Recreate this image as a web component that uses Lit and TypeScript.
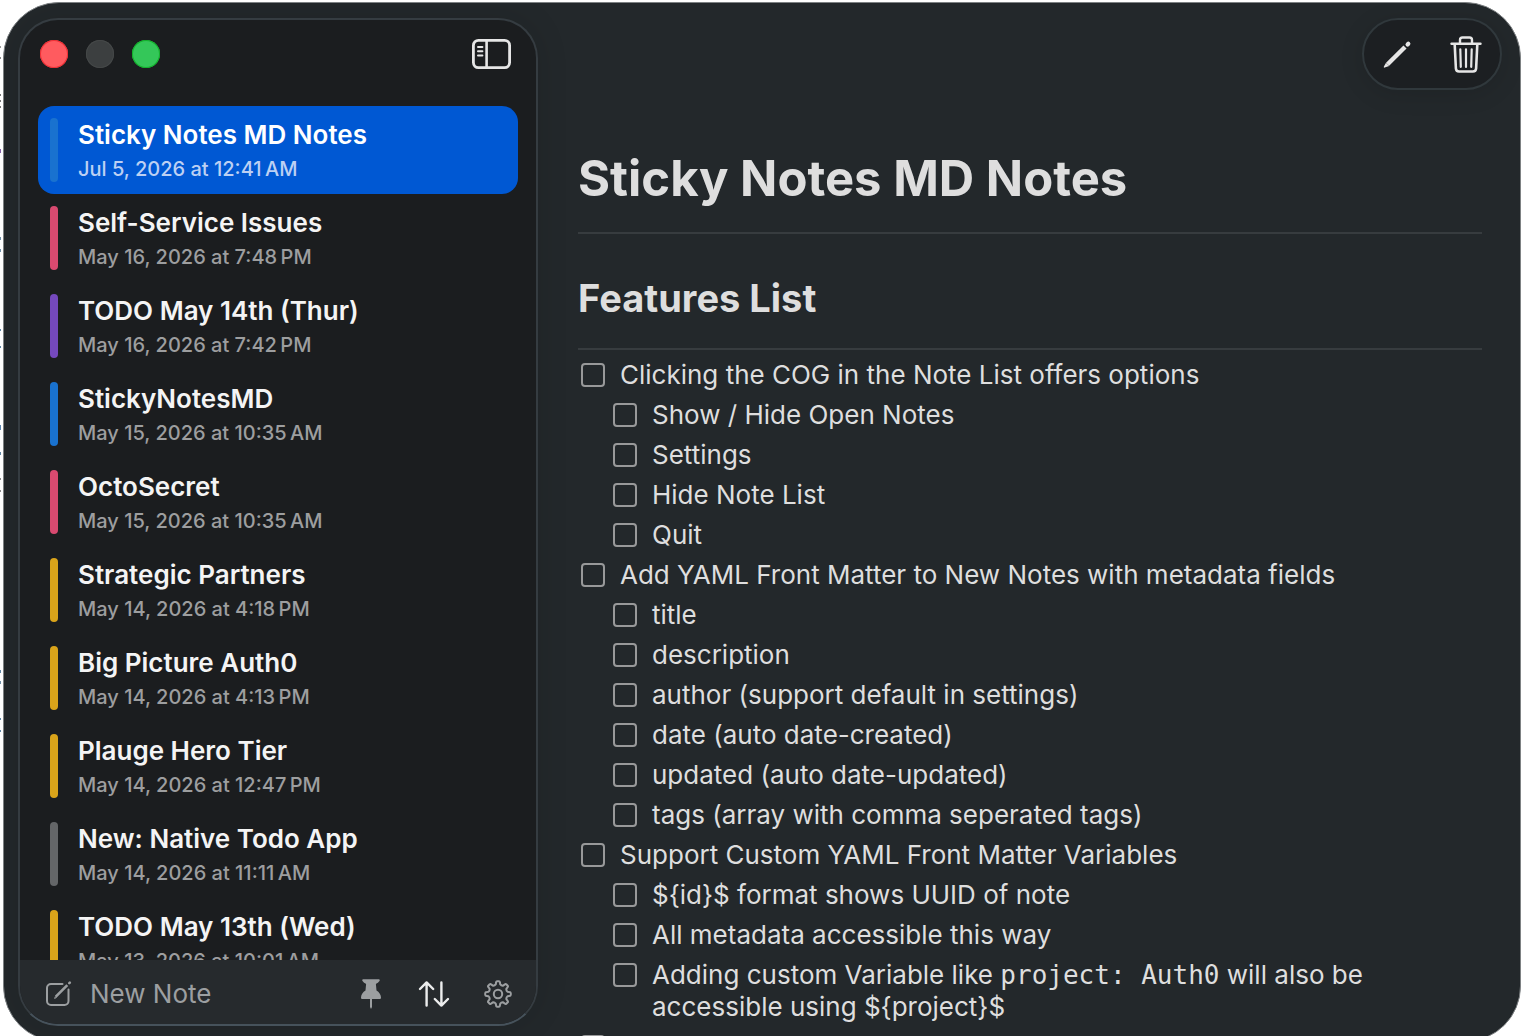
import { LitElement, html, svg, css } from "lit";
import { customElement, state } from "lit/decorators.js";
import { classMap } from "lit/directives/class-map.js";

interface Note {
  title: string;
  date: string;
  color: string;
}

interface Task {
  text: unknown;
  nested?: boolean;
}

const NOTES: Note[] = [
  { title: "Sticky Notes MD Notes", date: "Jul 5, 2026 at 12:41\u202fAM", color: "blue" },
  { title: "Self-Service Issues", date: "May 16, 2026 at 7:48\u202fPM", color: "pink" },
  { title: "TODO May 14th (Thur)", date: "May 16, 2026 at 7:42\u202fPM", color: "purple" },
  { title: "StickyNotesMD", date: "May 15, 2026 at 10:35\u202fAM", color: "blue" },
  { title: "OctoSecret", date: "May 15, 2026 at 10:35\u202fAM", color: "pink" },
  { title: "Strategic Partners", date: "May 14, 2026 at 4:18\u202fPM", color: "yellow" },
  { title: "Big Picture Auth0", date: "May 14, 2026 at 4:13\u202fPM", color: "yellow" },
  { title: "Plauge Hero Tier", date: "May 14, 2026 at 12:47\u202fPM", color: "yellow" },
  { title: "New: Native Todo App", date: "May 14, 2026 at 11:11\u202fAM", color: "gray" },
  { title: "TODO May 13th (Wed)", date: "May 13, 2026 at 10:01\u202fAM", color: "yellow" },
];

const TASKS: Task[] = [
  { text: "Clicking the COG in the Note List offers options" },
  { text: "Show / Hide Open Notes", nested: true },
  { text: "Settings", nested: true },
  { text: "Hide Note List", nested: true },
  { text: "Quit", nested: true },
  { text: "Add YAML Front Matter to New Notes with metadata fields" },
  { text: "title", nested: true },
  { text: "description", nested: true },
  { text: "author (support default in settings)", nested: true },
  { text: "date (auto date-created)", nested: true },
  { text: "updated (auto date-updated)", nested: true },
  { text: "tags (array with comma seperated tags)", nested: true },
  { text: "Support Custom YAML Front Matter Variables" },
  { text: "${id}$ format shows UUID of note", nested: true },
  { text: "All metadata accessible this way", nested: true },
  {
    text: html`Adding custom Variable like <code>project: Auth0</code> will also be accessible using \${project}$`,
    nested: true,
  },
  { text: "" },
];

// Slivers of the page behind the window: [y, height, colour].
const BEHIND: [number, number, string][] = [
  [46, 2, "#9a9a9a"],
  [57, 2, "#8a8a8a"],
  [94, 2, "#777"],
  [100, 2, "#777"],
  [106, 2, "#777"],
  [149, 4, "#8561a8"],
  [237, 3, "#6f8fa6"],
  [249, 3, "#6f8fa6"],
  [329, 2, "#5f86a4"],
  [346, 2, "#5f86a4"],
  [425, 5, "#5c84ad"],
  [452, 3, "#5f86a4"],
  [478, 2, "#8a8a8a"],
  [490, 2, "#8a8a8a"],
  [670, 3, "#5f86a4"],
  [681, 3, "#6f8fa6"],
  [718, 2, "#5f86a4"],
  [730, 2, "#5f86a4"],
];

// Outline of the settings cog: rounded teeth around a ring.
function cogPath(teeth: number, outer: number, inner: number, c: number): string {
  const step = (Math.PI * 2) / teeth;
  const at = (r: number, a: number) =>
    `${(c + r * Math.sin(a)).toFixed(2)} ${(c - r * Math.cos(a)).toFixed(2)}`;
  let d = "";
  for (let i = 0; i < teeth; i++) {
    const a = i * step;
    d += i ? `Q${at(inner - 1, a - step * 0.5)} ${at(inner, a - step * 0.3)}` : `M${at(inner, a - step * 0.3)}`;
    d += `L${at(outer - 1.4, a - step * 0.22)}`;
    d += `Q${at(outer, a - step * 0.2)} ${at(outer, a - step * 0.1)}`;
    d += `L${at(outer, a + step * 0.1)}`;
    d += `Q${at(outer, a + step * 0.2)} ${at(outer - 1.4, a + step * 0.22)}`;
    d += `L${at(inner, a + step * 0.3)}`;
  }
  return `${d}Q${at(inner - 1, -step * 0.5)} ${at(inner, -step * 0.3)}Z`;
}

@customElement("notes-sidebar")
export class NotesSidebar extends LitElement {
  @state() private selected = 0;

  static styles = css`
    :host {
      display: flex;
      flex-direction: column;
      box-sizing: border-box;
      overflow: hidden;
      border: 2px solid #353c41;
      border-bottom-color: #46525b;
      border-radius: 40px;
      background: #1b1d1f;
      box-shadow: 0 0 32px rgba(0, 0, 0, 0.12);
    }
    button {
      margin: 0;
      padding: 0;
      border: 0;
      background: none;
      color: inherit;
      font: inherit;
      text-align: left;
    }
    svg {
      display: block;
    }
    .titlebar {
      display: flex;
      align-items: center;
      gap: 18px;
      flex: none;
      height: 68px;
      padding: 0 24px 0 20px;
    }
    .light {
      width: 28px;
      height: 28px;
      border-radius: 50%;
    }
    .close {
      background: #ff5b5f;
      box-shadow: inset 0 0 0 1px #ee2f35;
    }
    .minimize {
      background: #3c3f40;
      box-shadow: inset 0 0 0 1px #454848;
    }
    .zoom {
      background: #34c759;
      box-shadow: inset 0 0 0 1px #12b02a;
    }
    .toggle {
      margin-left: auto;
      color: #e6e6e6;
    }
    .notes {
      flex: 1;
      min-height: 0;
      overflow: hidden;
      margin: 0;
      padding: 18px 18px 0;
      list-style: none;
    }
    .note {
      display: flex;
      gap: 20px;
      box-sizing: border-box;
      width: 100%;
      height: 88px;
      padding: 12px;
      border-radius: 16px;
    }
    .note.selected {
      background: #0058d3;
    }
    .bar {
      width: 8px;
      border-radius: 4px;
    }
    .blue { background: #1972cf; }
    .pink { background: #d94a70; }
    .purple { background: #7549bd; }
    .yellow { background: #daa41a; }
    .gray { background: #646668; }
    .text {
      display: flex;
      flex-direction: column;
      white-space: nowrap;
    }
    .title {
      color: #f4f4f4;
      font-size: 26px;
      font-weight: 600;
      line-height: 34px;
    }
    .date {
      color: #9d9e9f;
      font-size: 20px;
      font-weight: 500;
      line-height: 34px;
    }
    .selected .title { color: #fff; }
    .selected .date { color: #bcd0f3; }
    .footer {
      display: flex;
      align-items: center;
      flex: none;
      box-sizing: border-box;
      height: 64px;
      padding: 4px 24px 0;
      background: #262a2d;
      color: #9c9fa1;
    }
    .new {
      display: flex;
      align-items: center;
      gap: 18px;
      margin-right: auto;
      font-size: 26px;
      line-height: 32px;
    }
    .tools {
      display: flex;
      align-items: center;
      gap: 34px;
    }
    .sort { color: #eceded; }
  `;

  render() {
    return html`
      <div class="titlebar">
        <button class="light close" aria-label="Close"></button>
        <button class="light minimize" aria-label="Minimize"></button>
        <button class="light zoom" aria-label="Zoom"></button>
        <button class="toggle" aria-label="Toggle sidebar">
          <svg width="40" height="32" viewBox="0 0 40 32" fill="none" stroke="currentColor">
            <rect x="1.4" y="2.4" width="36.2" height="27.2" rx="5" stroke-width="2.8" />
            <path d="M14.6 2.4v27.2" stroke-width="2.6" />
            <path d="M6 9h4.4M6 13.3h4.4M6 17.600h4.400" stroke-width="2" stroke-linecap="round" />
          </svg>
        </button>
      </div>
      <ul class="notes">
        ${NOTES.map(
          (n, i) => html`<li>
            <button
              class=${classMap({ note: true, selected: i === this.selected })}
              @click=${() => (this.selected = i)}
            >
              <span class="bar ${n.color}"></span>
              <span class="text">
                <span class="title">${n.title}</span>
                <span class="date">${n.date}</span>
              </span>
            </button>
          </li>`,
        )}
      </ul>
      <div class="footer">
        <button class="new">
          <svg width="28" height="28" viewBox="-1 0 28 28" fill="none" stroke="currentColor" stroke-width="2">
            <path d="M17.500 4H6a4 4 0 0 0-4 4v13a4 4 0 0 0 4 4h13.500a4 4 0 0 0 4-4V9.500" stroke-linecap="round" />
            <path d="M10.800 16.700 22.300 5.100" stroke-width="2.600" />
            <path d="M9.600 18.400l1.800-.8-1-1z" stroke-width="1" />
            <path d="M24.300 3.100l.5-.5" stroke-width="2.600" stroke-linecap="round" />
          </svg>
          New Note
        </button>
        <div class="tools">
          <button aria-label="Pin">
            <svg width="24" height="32" viewBox="1 0 24 32" fill="currentColor">
              <path d="M4.200 1.200h15.600c1 0 1.200 1 .7 1.700-.8 1.200-2.200 2.200-3.600 3l.6 6.600c2.600 1.500 4.300 3.900 4.500 7 0 1-.6 1.500-1.500 1.500H3.500c-.9 0-1.500-.5-1.500-1.500.2-3.100 1.900-5.500 4.500-7l.6-6.600c-1.400-.8-2.800-1.800-3.600-3-.5-.7-.3-1.700.7-1.700z" />
              <path d="M11 20h2v9l-1 2-1-2z" />
            </svg>
          </button>
          <button class="sort" aria-label="Sort">
            <svg width="32" height="28" viewBox="0 0 32 28" fill="none" stroke="currentColor" stroke-width="2.4" stroke-linecap="round" stroke-linejoin="round">
              <path d="M8.600 25.500V2.500M2 9l6.600-6.600L15.200 9" />
              <path d="M23.400 2.500v23M16.800 19l6.600 6.600L30 19" />
            </svg>
          </button>
          <button aria-label="Settings">
            <svg width="28" height="28" viewBox="0 0 28 28" fill="none" stroke="currentColor" stroke-width="2" stroke-linejoin="round">
              <path d=${cogPath(8, 12.8, 9.800, 14)} />
              <circle cx="14" cy="14" r="4.200" />
            </svg>
          </button>
        </div>
      </div>
    `;
  }
}

@customElement("note-view")
export class NoteView extends LitElement {
  static styles = css`
    :host {
      display: flex;
      flex-direction: column;
      min-width: 0;
      color: #dedede;
    }
    .toolbar {
      display: flex;
      align-self: flex-end;
      align-items: center;
      justify-content: space-between;
      flex: none;
      box-sizing: border-box;
      width: 140px;
      height: 72px;
      padding: 0 16px;
      border: 2px solid #30383c;
      border-radius: 36px;
      background: #1c1f22;
      color: #e6e6e6;
      box-shadow: 0 4px 24px rgba(0, 0, 0, 0.12);
    }
    button {
      margin: 0;
      padding: 0;
      border: 0;
      background: none;
      color: inherit;
      font: inherit;
    }
    svg {
      display: block;
    }
    .document {
      padding: 56px 20px 0 40px;
    }
    h1,
    h2 {
      margin: 0;
      border-bottom: 2px solid #373c3f;
      font-weight: 700;
    }
    h1 {
      padding-bottom: 20px;
      font-size: 49px;
      line-height: 66px;
    }
    h2 {
      padding: 40px 0 26px;
      font-size: 38px;
      line-height: 48px;
    }
    .tasks {
      margin: 0;
      padding: 9px 0 0;
      list-style: none;
    }
    .task {
      display: flex;
      align-items: flex-start;
      gap: 15px;
      margin-bottom: 8px;
      padding-left: 3px;
      font-size: 26px;
      line-height: 32px;
    }
    .nested {
      padding-left: 35px;
    }
    input {
      appearance: none;
      flex: none;
      box-sizing: border-box;
      width: 24px;
      height: 24px;
      margin: 4px 0;
      border: 2px solid #98999a;
      border-radius: 4px;
    }
    input:checked {
      background: #98999a;
    }
    code {
      font-family: "DejaVu Sans Mono", monospace;
      font-size: 26px;
      line-height: 30px;
    }
  `;

  render() {
    return html`
      <div class="toolbar">
        <button aria-label="Edit">
          <svg width="36" height="40" viewBox="2 -0.5 36 40" stroke="currentColor" fill="currentColor">
            <path d="M9.600 29.800 27 12.500" stroke-width="4.400" />
            <path d="M8 28.200 5.800 32.200q-.2 1.100.9.900l4.500-1.700z" stroke="none" />
            <path d="M29.600 9.900l.7-.7" stroke-width="4.200" stroke-linecap="round" />
          </svg>
        </button>
        <button aria-label="Delete">
          <svg width="36" height="40" viewBox="0 -1 36 40" fill="none" stroke="currentColor" stroke-linecap="round" stroke-linejoin="round">
            <path d="M3.500 8.800h29" stroke-width="2.400" />
            <path d="M12 8.500V5a2.500 2.500 0 0 1 2.500-2.500h7A2.500 2.500 0 0 1 24 5v3.500" stroke-width="2.400" />
            <path d="M6.700 9.500l1.200 24a3.200 3.200 0 0 0 3.200 3h13.800a3.200 3.200 0 0 0 3.200-3l1.200-24" stroke-width="2.600" />
            <path d="M12.300 14.300l.5 17.600M18 14.300v17.600M23.700 14.300l-.5 17.600" stroke-width="2.200" />
          </svg>
        </button>
      </div>
      <article class="document">
        <h1>Sticky Notes MD Notes</h1>
        <h2>Features List</h2>
        <ul class="tasks">
          ${TASKS.map(
            (t, i) => html`<li class=${classMap({ task: true, nested: !!t.nested })}>
              <input type="checkbox" id="task-${i}" />
              <label for="task-${i}">${t.text}</label>
            </li>`,
          )}
        </ul>
      </article>
    `;
  }
}

@customElement("app-root")
export class AppRoot extends LitElement {
  static styles = css`
    :host {
      display: block;
      position: relative;
      box-sizing: border-box;
      height: 100vh;
      overflow: hidden;
      padding: 2px 5px 0 3px;
      background: #fff;
      font-family: Inter, "Liberation Sans", sans-serif;
    }
    .behind {
      position: absolute;
      top: 0;
      left: 0;
      width: 1px;
      height: 100%;
    }
    .window {
      display: grid;
      grid-template-columns: minmax(280px, 520px) 1fr;
      box-sizing: border-box;
      height: calc(100vh + 4px);
      padding: 15px 18px 15px 14px;
      border: 1px solid #7d8183;
      border-radius: 56px;
      overflow: hidden;
      background: #23282b;
    }
    notes-sidebar,
    note-view {
      min-height: 0;
    }
  `;

  render() {
    return html`
      <svg class="behind" aria-hidden="true">
        ${BEHIND.map(([y, h, fill]) => svg`<rect x="0" y=${y} width="1" height=${h} fill=${fill} />`)}
      </svg>
      <div class="window">
        <notes-sidebar></notes-sidebar>
        <note-view></note-view>
      </div>
    `;
  }
}
